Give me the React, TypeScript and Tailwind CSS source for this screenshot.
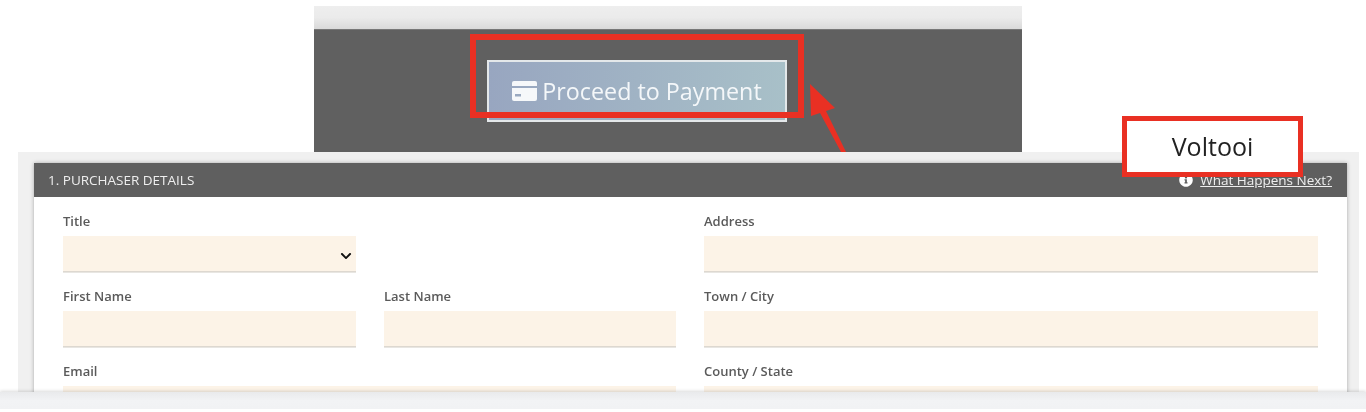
import { FaChevronDown, FaInfoCircle } from "react-icons/fa";

function CardIcon() {
  return (
    <svg width="25" height="20" viewBox="0 0 25 20" className="shrink-0">
      <path d="M2 0 H23 A2 2 0 0 1 25 2 V5 H0 V2 A2 2 0 0 1 2 0 Z" fill="#f6f8fa" />
      <path d="M0 7 H25 V18 A2 2 0 0 1 23 20 H2 A2 2 0 0 1 0 18 Z" fill="#f6f8fa" />
      <rect x="3" y="13" width="6" height="2.5" fill="#9aa9c0" />
    </svg>
  );
}

function Field({ label, select }: { label: string; select?: boolean }) {
  return (
    <div className="mb-[13px]">
      <label className="flex h-[26px] items-start text-[13px] font-semibold leading-[22px] text-[#5a5a5a]">{label}</label>
      <div className="relative h-[36px] border-b border-[#ddd8d0] bg-[#fcf3e7] shadow-[0_1px_0_#e8e6e2]">
        {select && <FaChevronDown className="absolute right-[4px] top-[14px] text-[12px] text-[#111]" />}
      </div>
    </div>
  );
}

export default function App() {
  return (
    <div className="relative h-[412px] w-[1366px] overflow-hidden bg-white font-['Open_Sans',sans-serif] blur-[0.4px]">
      <div className="ml-[314px] mt-[6px] h-[146px] w-[708px]">
        <div className="h-[23px] bg-gradient-to-b from-[#eeeeee] via-[#ebebeb] to-[#d9d9d9]" />
        <div className="h-[123px] border-t border-[#777] bg-[#606060] pl-[173px] pt-[30px]">
          <button className="flex h-[62px] w-[300px] items-center justify-center gap-[5px] border-2 border-[#e4e8ea] bg-gradient-to-r from-[#98a6c0] to-[#a8c0c8] text-[23.3px] font-medium text-[#f4f7f9]">
            <CardIcon />
            Proceed to Payment
          </button>
        </div>
      </div>

      <div className="ml-[18px] h-[240px] w-[1341px] overflow-hidden bg-[#f0f0f0] pl-[16px] pr-[12px] pt-[11px]">
        <div className="h-[300px] bg-white shadow-[0_0_4px_rgba(0,0,0,0.3)]">
          <div className="flex h-[34px] items-center justify-between bg-[#5f5f5f] pl-[14px] pr-[15px] text-[13.5px] font-medium text-[#eeeeee]">
            <span>1. PURCHASER DETAILS</span>
            <span className="flex items-center gap-[7px]">
              <FaInfoCircle className="text-[14px] text-white" />
              <a className="underline">What Happens Next?</a>
            </span>
          </div>
          <div className="grid grid-cols-[613px_614px] gap-x-[28px] pl-[29px] pt-[13px]">
            <div>
              <div className="w-[293px]">
                <Field label="Title" select />
              </div>
              <div className="grid grid-cols-[293px_292px] gap-x-[28px]">
                <Field label="First Name" />
                <Field label="Last Name" />
              </div>
              <Field label="Email" />
            </div>
            <div>
              <Field label="Address" />
              <Field label="Town / City" />
              <Field label="County / State" />
            </div>
          </div>
        </div>
      </div>

      <div className="relative h-[20px] border-b-[3px] border-white bg-gradient-to-b from-[#e9eaec] via-[#f2f3f5] to-[#f1f2f4] shadow-[0_-1px_3px_rgba(0,0,0,0.15)]" />

      {/* annotations drawn over the screenshot */}
      <div className="absolute left-[470px] top-[34px] h-[84px] w-[334px] border-[6px] border-[#e93023]" />
      <svg className="absolute left-[800px] top-[75px]" width="60" height="80" viewBox="800 75 60 80">
        <path d="M810 84 L835 108 L826 111 L846 152 L841 152 L820 113 L811 116 Z" fill="#e93023" />
      </svg>
      <div className="absolute left-[1122px] top-[116px] flex h-[61px] w-[181px] items-center justify-center border-[5px] border-[#e93023] bg-white text-[25px] font-medium text-[#222]">
        Voltooi
      </div>
    </div>
  );
}
